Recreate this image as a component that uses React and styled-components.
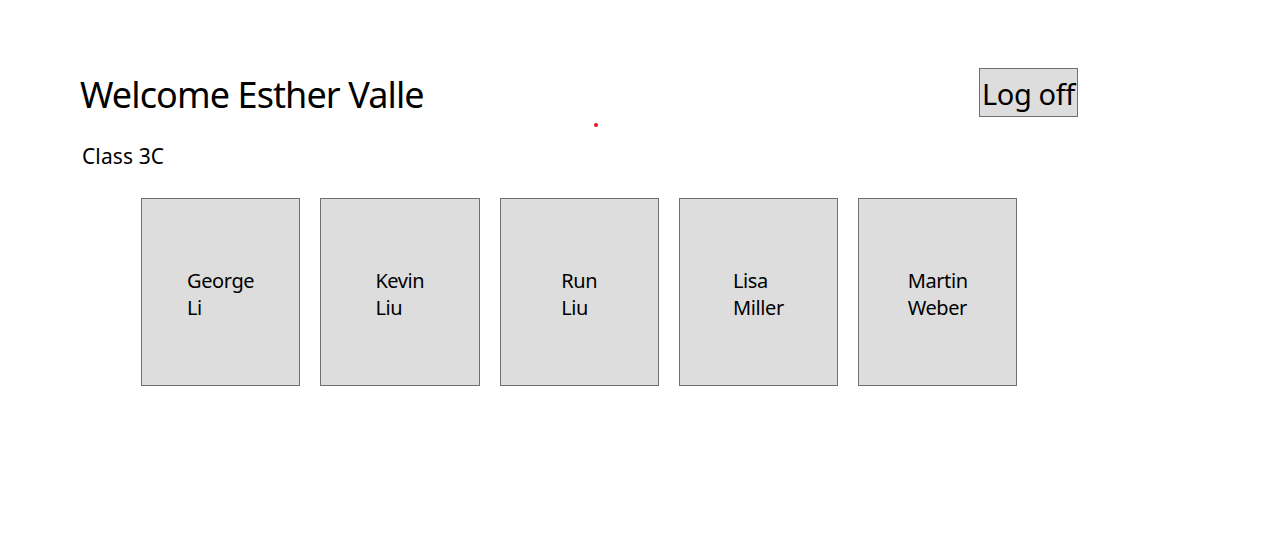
import styled, { createGlobalStyle } from 'styled-components';

const GlobalStyle = createGlobalStyle`
  html, body {
    margin: 0;
    padding: 0;
    background: #ffffff;
  }
  body {
    font-family: 'Noto Sans', 'Open Sans', sans-serif;
    color: #000000;
  }
`;

const students = [
  { first: 'George', last: 'Li' },
  { first: 'Kevin', last: 'Liu' },
  { first: 'Run', last: 'Liu' },
  { first: 'Lisa', last: 'Miller' },
  { first: 'Martin', last: 'Weber' },
];

const Page = styled.div`
  position: relative;
  width: 1282px;
  height: 541px;
  padding-top: 68px;
  box-sizing: border-box;
`;

const Header = styled.div`
  display: flex;
  justify-content: space-between;
  align-items: flex-start;
  width: 998px;
  margin-left: 80px;
`;

const Title = styled.h1`
  margin: 3px 0 0;
  font-size: 36px;
  font-weight: 400;
  line-height: 48px;
  letter-spacing: -0.9px;
`;

const LogOff = styled.button`
  width: 99px;
  height: 49px;
  padding: 0 0 0 2px;
  margin: 0;
  box-sizing: border-box;
  border: 1px solid #707070;
  background: #dddddd;
  font-family: inherit;
  font-size: 29px;
  line-height: 49px;
  text-align: left;
  white-space: nowrap;
  overflow: hidden;
  letter-spacing: -0.4px;
  color: #000000;
`;

const ClassName = styled.div`
  margin: 24px 0 0 82px;
  font-size: 21px;
  line-height: 26px;
  letter-spacing: 0.1px;
`;

const CardRow = styled.div`
  display: flex;
  gap: 20px;
  margin: 29px 0 0 141px;
`;

const Card = styled.div`
  width: 159.25px;
  height: 188px;
  box-sizing: border-box;
  border: 1px solid #707070;
  background: #dddddd;
  display: flex;
  align-items: center;
  justify-content: center;
`;

const Name = styled.div`
  font-size: 20px;
  line-height: 27px;
  margin-top: 4px;
  letter-spacing: -0.4px;
`;

const Dot = styled.div`
  position: absolute;
  left: 594px;
  top: 123px;
  width: 4px;
  height: 4px;
  border-radius: 50%;
  background: #e81123;
`;

const App = () => {
  return (
    <Page>
      <GlobalStyle />
      <Header>
        <Title>Welcome Esther Valle</Title>
        <LogOff>Log off</LogOff>
      </Header>
      <ClassName>Class 3C</ClassName>
      <CardRow>
        {students.map((s) => (
          <Card key={s.first + s.last}>
            <Name>
              {s.first}
              <br />
              {s.last}
            </Name>
          </Card>
        ))}
      </CardRow>
      <Dot />
    </Page>
  );
};

export default App;
